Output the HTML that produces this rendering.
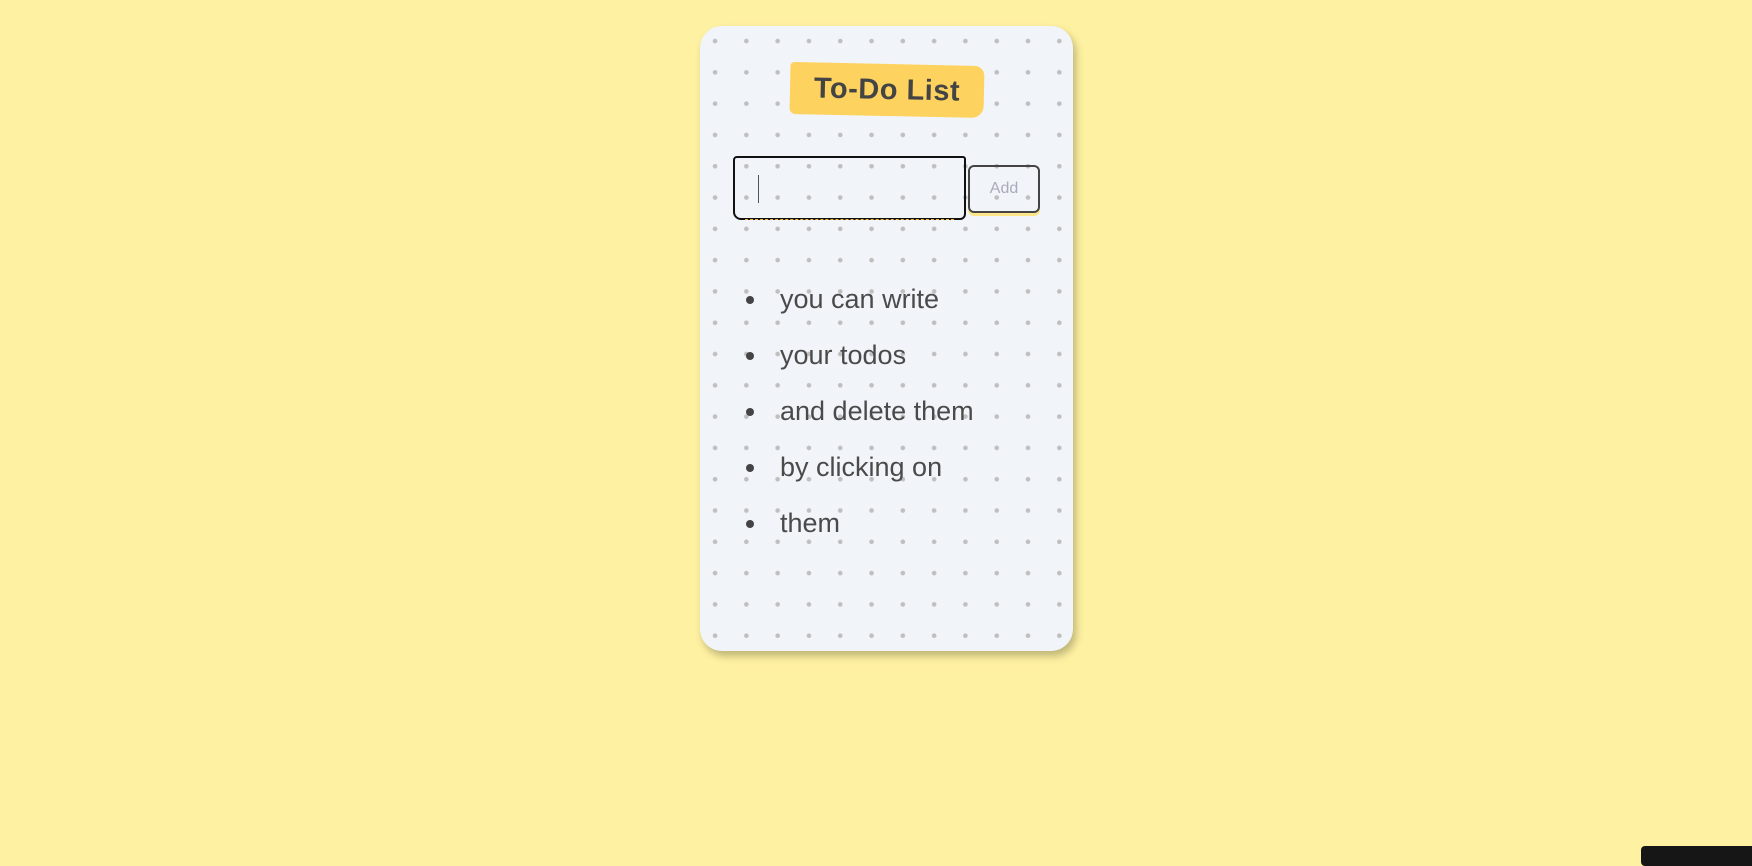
<!DOCTYPE html>
<html><head><style>
html,body{margin:0;padding:0}
body{width:1752px;height:860px;background:#fef1a1;position:relative;overflow:hidden;font-family:"Liberation Sans",sans-serif}
.card{position:absolute;left:700px;top:26px;width:373px;height:625px;border-radius:22px;background-color:#f1f5f9;
background-image:radial-gradient(circle,#bfbfbf 2px,transparent 2.6px);background-size:31.3px 31.3px;background-position:-0.6px -0.6px;
box-shadow:3px 5px 8px rgba(0,0,0,.25)}
.title{position:absolute;left:90px;top:38px;width:194px;height:52px;background:#fed25e;border-radius:4px 10px 12px 6px;transform:rotate(1.2deg);
text-align:center;line-height:52px;font-size:29px;font-weight:bold;color:#444;letter-spacing:0.5px}
.inp{position:absolute;left:33px;top:130px;width:229px;height:60px;border:2px solid #111;border-radius:4px 3px 6px 8px}
.inp:after{content:"";position:absolute;left:10px;right:10px;bottom:-2px;border-bottom:1px dashed #f3b93a}
.caret{position:absolute;left:23px;top:17px;width:1px;height:28px;background:#555}
.btn{position:absolute;left:268px;top:139px;width:68px;height:44px;border:2px solid #444;border-radius:6px;box-shadow:0 3px 0 #fde68a;
text-align:center;line-height:44px;color:#aab;font-size:16px}
ul{position:absolute;left:0;top:258px;margin:0;padding:0;list-style:none}
li{position:relative;height:56px;font-size:27px;color:#4a4a4a;padding-left:80px;line-height:30px}
li:before{content:"";position:absolute;left:46px;top:12px;width:8px;height:8px;border-radius:50%;background:#444}
.blk{position:absolute;left:1641px;top:846px;width:120px;height:20px;background:#161616;border-radius:4px}
</style></head><body>
<div class="card">
<div class="title">To-Do List</div>
<div class="inp"><div class="caret"></div></div>
<div class="btn">Add</div>
<ul><li>you can write</li><li>your todos</li><li>and delete them</li><li>by clicking on</li><li>them</li></ul>
</div>
<div class="blk"></div>
</body></html>
